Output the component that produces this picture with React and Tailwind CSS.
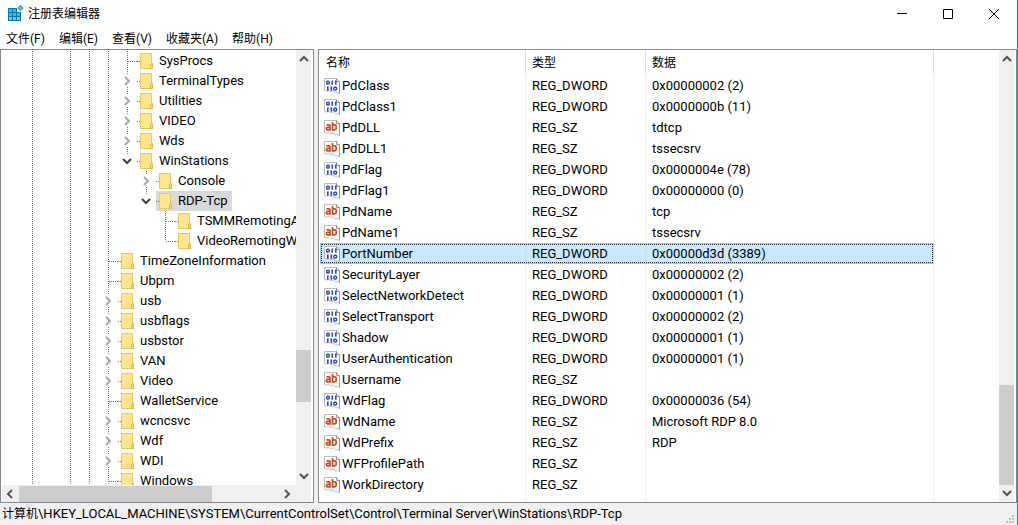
import { useState } from 'react';

const MENUS = ['文件(F)', '编辑(E)', '查看(V)', '收藏夹(A)', '帮助(H)'];

// guides: one entry per ancestor column, 1 = vertical line, 0 = blank
const TOP = [1, 0, 1, 1];
const TREE = [
  { name: 'SysProcs', guides: [...TOP, 1], state: 'leaf' },
  { name: 'TerminalTypes', guides: [...TOP, 1], state: 'closed' },
  { name: 'Utilities', guides: [...TOP, 1], state: 'closed' },
  { name: 'VIDEO', guides: [...TOP, 1], state: 'closed' },
  { name: 'Wds', guides: [...TOP, 1], state: 'closed' },
  { name: 'WinStations', guides: [...TOP, 1], state: 'open', last: true },
  { name: 'Console', guides: [...TOP, 1, 0], state: 'closed' },
  { name: 'RDP-Tcp', guides: [...TOP, 1, 0], state: 'open', last: true },
  { name: 'TSMMRemotingA', guides: [...TOP, 1, 0, 0], state: 'leaf' },
  { name: 'VideoRemotingW', guides: [...TOP, 1, 0, 0], state: 'leaf', last: true },
  { name: 'TimeZoneInformation', guides: TOP, state: 'leaf' },
  { name: 'Ubpm', guides: TOP, state: 'leaf' },
  { name: 'usb', guides: TOP, state: 'closed' },
  { name: 'usbflags', guides: TOP, state: 'closed' },
  { name: 'usbstor', guides: TOP, state: 'closed' },
  { name: 'VAN', guides: TOP, state: 'closed' },
  { name: 'Video', guides: TOP, state: 'closed' },
  { name: 'WalletService', guides: TOP, state: 'leaf' },
  { name: 'wcncsvc', guides: TOP, state: 'closed' },
  { name: 'Wdf', guides: TOP, state: 'closed' },
  { name: 'WDI', guides: TOP, state: 'closed' },
  { name: 'Windows', guides: TOP, state: 'leaf' },
];

const VALUES = [
  ['PdClass', 'REG_DWORD', '0x00000002 (2)'],
  ['PdClass1', 'REG_DWORD', '0x0000000b (11)'],
  ['PdDLL', 'REG_SZ', 'tdtcp'],
  ['PdDLL1', 'REG_SZ', 'tssecsrv'],
  ['PdFlag', 'REG_DWORD', '0x0000004e (78)'],
  ['PdFlag1', 'REG_DWORD', '0x00000000 (0)'],
  ['PdName', 'REG_SZ', 'tcp'],
  ['PdName1', 'REG_SZ', 'tssecsrv'],
  ['PortNumber', 'REG_DWORD', '0x00000d3d (3389)'],
  ['SecurityLayer', 'REG_DWORD', '0x00000002 (2)'],
  ['SelectNetworkDetect', 'REG_DWORD', '0x00000001 (1)'],
  ['SelectTransport', 'REG_DWORD', '0x00000002 (2)'],
  ['Shadow', 'REG_DWORD', '0x00000001 (1)'],
  ['UserAuthentication', 'REG_DWORD', '0x00000001 (1)'],
  ['Username', 'REG_SZ', ''],
  ['WdFlag', 'REG_DWORD', '0x00000036 (54)'],
  ['WdName', 'REG_SZ', 'Microsoft RDP 8.0'],
  ['WdPrefix', 'REG_SZ', 'RDP'],
  ['WFProfilePath', 'REG_SZ', ''],
  ['WorkDirectory', 'REG_SZ', ''],
];

const DOTS_V = 'w-px bg-[repeating-linear-gradient(to_bottom,#777_0_1px,transparent_1px_2px)]';
const DOTS_H = 'h-px bg-[repeating-linear-gradient(to_right,#777_0_1px,transparent_1px_2px)]';

function AppIcon() {
  return (
    <svg width="17" height="18" viewBox="0 0 17 18" className="shrink-0" aria-hidden="true">
      <path d="M1 3h9v4h4v9H1z" fill="#0b78ad" />
      <path d="M2 4h3v3H2zM6 4h3v3H6zM2 8h3v3H2zM6 8h3v3H6zM10 8h3v3h-3z" fill="#35b8ea" />
      <path d="M2 12h3v3H2zM6 12h3v3H6zM10 12h3v3h-3z" fill="#5fd0f5" />
      <path d="M13.500 0l3 3-3 3-3-3z" fill="#1b8fc4" />
      <path d="M13.500 1.500l1.500 1.500-1.500 1.500-1.500-1.500z" fill="#6ccdf0" />
    </svg>
  );
}

function FolderIcon() {
  return (
    <svg width="14" height="16" viewBox="0 0 14 16" className="shrink-0" aria-hidden="true">
      <path d="M.5.5h11v10h1v5H.5z" fill="#fde68f" stroke="#ecc75e" />
      <path d="M10.500 15.500v-4l2-1v5z" fill="#fbd95f" stroke="#e6b93c" />
    </svg>
  );
}

function ValueIcon({ type }) {
  return (
    <svg width="16" height="16" viewBox="0 0 16 16" className="shrink-0" aria-hidden="true">
      <path d="M.5.5h12l3 3v12l-2-1-2 .5-2-2-3 .5-2-1-2 .5-2-.5z" fill="#fff" stroke="#bdbdbd" />
      <path d="M12.500.5v3h3v12" fill="none" stroke="#959595" />
      {type === 'REG_SZ' ? (
        <g fill="none" stroke="#cc4a25" strokeWidth="1.700">
          <path d="M2.500 4.800h2.500q1 0 1 1v4H3.500q-1.200 0-1.200-1.200t1.200-1.200H6" />
          <path d="M8.500 2v7.800h2q1.700 0 1.700-1.500V6.300q0-1.500-1.700-1.500h-2" />
        </g>
      ) : (
        <g fill="none" stroke="#2846b8" strokeWidth="1.400">
          <rect x="2.700" y="3.200" width="2.600" height="2.800" rx="1" />
          <path d="M8.300 2.500v4.200M11.800 2.500v4.200" strokeWidth="1.600" />
          <path d="M3.800 8.500v4.200M7.300 8.500v4.200" strokeWidth="1.600" />
          <rect x="9.800" y="9.200" width="2.800" height="2.800" rx="1" />
        </g>
      )}
    </svg>
  );
}

function ScrollArrow({ dir, label }) {
  const turn = { up: '-rotate-90', down: 'rotate-90', left: 'rotate-180', right: '' }[dir];
  return (
    <button type="button" aria-label={label} className="flex size-4 shrink-0 items-center justify-center text-[#555]">
      <svg width="8" height="10" viewBox="0 0 8 10" className={turn} aria-hidden="true">
        <path d="M2 1l4 4-4 4" fill="none" stroke="currentColor" strokeWidth="2" />
      </svg>
    </button>
  );
}

function Guide({ on }) {
  return (
    <span className="flex w-[19px] shrink-0 pl-[9px]">
      {on ? <span className={DOTS_V} /> : null}
    </span>
  );
}

function Branch({ state, last }) {
  if (state === 'leaf') {
    return (
      <span className="flex w-[19px] shrink-0 pl-[9px]">
        <span className={`${DOTS_V} ${last ? 'h-[10px]' : ''}`} />
        <span className={`mt-[10px] flex-1 ${DOTS_H}`} />
      </span>
    );
  }
  return (
    <span className="flex w-[19px] shrink-0 flex-col items-center">
      <span className={`h-1 ${DOTS_V}`} />
      <button type="button" aria-label={state === 'open' ? '折叠' : '展开'} className="ml-[3px] flex h-3 items-center self-start">
        <svg
          width="12"
          height="12"
          viewBox="0 0 12 12"
          className={state === 'open' ? 'rotate-90 text-[#404040]' : 'text-[#a6a6a6]'}
        >
          <path d="M4 2l4 4-4 4" fill="none" stroke="currentColor" strokeWidth="2" />
        </svg>
      </button>
      {last ? null : <span className={`h-1 ${DOTS_V}`} />}
    </span>
  );
}

function TreeRow({ item, selected, onSelect }) {
  return (
    <li role="treeitem" aria-selected={selected} className="flex h-5">
      {item.guides.map((on, i) => <Guide key={i} on={on} />)}
      <Branch state={item.state} last={item.last} />
      <button
        type="button"
        onClick={onSelect}
        className={`flex items-center whitespace-nowrap pr-1 ${selected ? 'bg-[#d9d9d9]' : ''}`}
      >
        <span className={`w-[3px] ${DOTS_H}`} />
        <FolderIcon />
        <span className="pl-[5px]">{item.name}</span>
      </button>
    </li>
  );
}

export default function App() {
  const [key, setKey] = useState('RDP-Tcp');
  const [value, setValue] = useState('PortNumber');

  return (
    <div className="flex h-screen flex-col overflow-hidden border-r border-[#2d83b0] bg-white font-[Roboto,'Noto_Sans_CJK_SC',sans-serif] text-[13px] leading-4 text-black">
      <header className="flex h-7 shrink-0 items-center justify-between pl-[7px]">
        <h1 className="flex items-center gap-1 text-[12px]">
          <AppIcon />
          注册表编辑器
        </h1>
        <div className="flex">
          <button type="button" aria-label="最小化" className="flex h-7 w-[46px] items-center justify-center">
            <svg width="10" height="10" viewBox="0 0 10 10"><path d="M0 4.500h10" stroke="#000" /></svg>
          </button>
          <button type="button" aria-label="最大化" className="flex h-7 w-[46px] items-center justify-center">
            <svg width="10" height="10" viewBox="0 0 10 10"><path d="M.5.5h9v9h-9z" fill="none" stroke="#000" /></svg>
          </button>
          <button type="button" aria-label="关闭" className="flex h-7 w-[46px] items-center justify-center">
            <svg width="10" height="10" viewBox="0 0 10 10"><path d="M0 0l10 10M10 0L0 10" stroke="#000" /></svg>
          </button>
        </div>
      </header>

      <nav className="flex h-[21px] shrink-0 items-center gap-[14px] pl-[6px] text-[12px]">
        {MENUS.map((m) => <button key={m} type="button">{m}</button>)}
      </nav>

      <main className="flex min-h-0 flex-1 gap-1 bg-[#f0f0f0]">
        {/* Key tree */}
        <section className="flex w-[314px] shrink-0 flex-col border border-[#828790] bg-white">
          <div className="flex min-h-0 flex-1">
            <ul role="tree" className="min-w-0 flex-1 overflow-hidden pl-[22px] pt-px">
              {TREE.map((item) => (
                <TreeRow key={item.name} item={item} selected={key === item.name} onSelect={() => setKey(item.name)} />
              ))}
            </ul>
            <div className="mr-[2px] flex w-[15px] flex-col items-center justify-between bg-[#f0f0f0] py-px">
              <ScrollArrow dir="up" label="向上滚动" />
              <div className="flex w-full flex-1 flex-col">
                <div className="flex-[283]" />
                <div className="flex-[52] bg-[#cdcdcd]" />
                <div className="flex-[66]" />
              </div>
              <ScrollArrow dir="down" label="向下滚动" />
            </div>
          </div>
          <div className="ml-px mr-[2px] flex h-[17px] shrink-0 items-center bg-[#f0f0f0] pr-4">
            <ScrollArrow dir="left" label="向左滚动" />
            <div className="flex h-4 flex-1 pl-px">
              <div className="flex-[193] bg-[#cdcdcd]" />
              <div className="flex-[67]" />
            </div>
            <ScrollArrow dir="right" label="向右滚动" />
          </div>
        </section>

        {/* Value list */}
        <section className="flex min-w-0 flex-1 border border-[#828790] bg-white">
          <div className="min-w-0 flex-1 overflow-hidden pl-px">
            <table className="h-full w-[614px] table-fixed border-separate border-spacing-0 text-left">
              <thead>
                <tr className="h-[25px] text-[12px]">
                  <th className="w-[206px] border-r border-[#e2e2e2] pl-[6px] font-normal">名称</th>
                  <th className="w-[120px] border-r border-[#e2e2e2] pl-[6px] font-normal">类型</th>
                  <th className="border-r border-[#e2e2e2] pl-[6px] font-normal">数据</th>
                </tr>
              </thead>
              <tbody>
                {VALUES.map(([name, type, data]) => {
                  const on = value === name;
                  const line = on ? 'border-[#c2dff6]' : 'border-[#f0f3f5]';
                  return (
                    <tr
                      key={name}
                      onClick={() => setValue(name)}
                      className={`h-[21px] ${on ? 'bg-[#cce8ff] shadow-[inset_0_0_0_1px_#a3c6e0] outline outline-1 -outline-offset-2 outline-dotted outline-[#1c2433]' : ''}`}
                    >
                      <td className={`border-r p-0 pl-1 ${line}`}>
                        <span className="flex items-center gap-[2px]">
                          <ValueIcon type={type} />
                          {name}
                        </span>
                      </td>
                      <td className={`border-r p-0 pl-[6px] ${line}`}>{type}</td>
                      <td className={`border-r p-0 pl-[6px] ${line}`}>{data}</td>
                    </tr>
                  );
                })}
                <tr>
                  <td className="border-r border-[#f0f3f5] p-0" />
                  <td className="border-r border-[#f0f3f5] p-0" />
                  <td className="border-r border-[#f0f3f5] p-0" />
                </tr>
              </tbody>
            </table>
          </div>
          <div className="mr-[2px] flex w-[15px] flex-col items-center justify-between bg-[#f0f0f0] py-px">
            <ScrollArrow dir="up" label="向上滚动" />
            <div className="flex w-full flex-1 flex-col">
              <div className="flex-[317]" />
              <div className="flex-[100] bg-[#cdcdcd]" />
            </div>
            <ScrollArrow dir="down" label="向下滚动" />
          </div>
        </section>
      </main>

      <footer className="flex h-[22px] shrink-0 items-center justify-between bg-[#f0f0f0] pl-[2px]">
        <p className="truncate">
          <span className="text-[12px]">计算机</span>\HKEY_LOCAL_MACHINE\SYSTEM\CurrentControlSet\Control\Terminal Server\WinStations\RDP-Tcp
        </p>
        <svg width="10" height="10" viewBox="0 0 10 10" className="mr-px self-end" aria-hidden="true">
          <path d="M6 0h2v2H6zM3 3h2v2H3zM6 3h2v2H6zM0 6h2v2H0zM3 6h2v2H3zM6 6h2v2H6z" fill="#bfbfbf" />
        </svg>
      </footer>
    </div>
  );
}
